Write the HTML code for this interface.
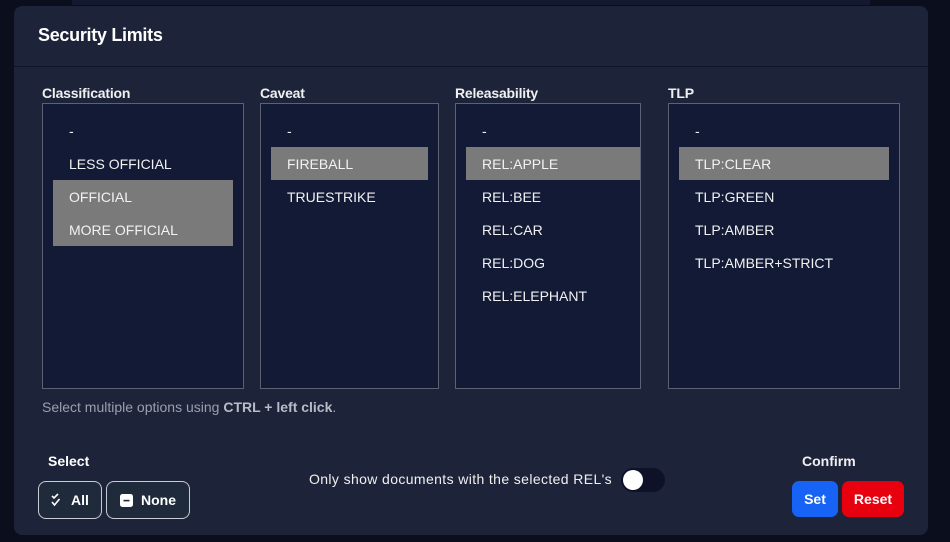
<!DOCTYPE html>
<html><head><meta charset="utf-8"><style>
*{margin:0;padding:0;box-sizing:border-box}
body{width:950px;height:542px;background:#0b0e1c;font-family:"Liberation Sans",sans-serif;color:#fff;position:relative;overflow:hidden}
.a{position:absolute}
.panel{left:14px;top:6px;width:914px;height:529px;background:#1d2339;border-radius:8px}
.top{left:72px;top:0;width:798px;height:5px;background:#141a2e}
.title{left:38px;top:25px;font-size:18px;font-weight:bold;letter-spacing:-0.3px}
.hr{left:14px;top:66px;width:914px;height:1px;background:#0f1427}
.lbl{font-size:14px;font-weight:bold;color:#f0f0f0;top:85px;letter-spacing:-0.2px}
.box{top:103px;height:286px;background:#131a35;border:1px solid #5c6273}
.it{position:absolute;left:10px;right:10px;height:33px;line-height:34px;padding-left:16px;font-size:14px;color:#f2f2f2}
.sel{background:#7a7a7a}
.btn{border:1px solid #c8ccd4;border-radius:8px;background:#1f2a3a;height:38px;top:481px;font-size:14px;font-weight:bold;display:flex;align-items:center;justify-content:center;gap:8px}
</style></head><body>
<div class="a top"></div>
<div class="a panel"></div>
<div class="a title">Security Limits</div>
<div class="a hr"></div>

<div class="a lbl" style="left:42px">Classification</div>
<div class="a lbl" style="left:260px">Caveat</div>
<div class="a lbl" style="left:455px">Releasability</div>
<div class="a lbl" style="left:668px">TLP</div>

<div class="a box" style="left:42px;width:202px">
<div class="it" style="top:10px">-</div>
<div class="it" style="top:43px">LESS OFFICIAL</div>
<div class="it sel" style="top:76px">OFFICIAL</div>
<div class="it sel" style="top:109px">MORE OFFICIAL</div>
</div>
<div class="a box" style="left:260px;width:179px">
<div class="it" style="top:10px">-</div>
<div class="it sel" style="top:43px">FIREBALL</div>
<div class="it" style="top:76px">TRUESTRIKE</div>
</div>
<div class="a box" style="left:455px;width:186px">
<div class="it" style="top:10px">-</div>
<div class="it sel" style="top:43px;right:0">REL:APPLE</div>
<div class="it" style="top:76px">REL:BEE</div>
<div class="it" style="top:109px">REL:CAR</div>
<div class="it" style="top:142px">REL:DOG</div>
<div class="it" style="top:175px">REL:ELEPHANT</div>
</div>
<div class="a box" style="left:668px;width:232px">
<div class="it" style="top:10px;right:10px">-</div>
<div class="it sel" style="top:43px;right:10px">TLP:CLEAR</div>
<div class="it" style="top:76px">TLP:GREEN</div>
<div class="it" style="top:109px">TLP:AMBER</div>
<div class="it" style="top:142px">TLP:AMBER+STRICT</div>
</div>

<div class="a" style="left:42px;top:399px;font-size:14px;color:#9aa0ad">Select multiple options using <b style="color:#b8bcc6">CTRL + left click</b>.</div>

<div class="a" style="left:48px;top:453px;font-size:14px;font-weight:bold">Select</div>
<div class="a btn" style="left:38px;width:64px"><svg width="12" height="14" viewBox="0 0 12 14"><path d="M1 3l2 2 4-4M1 9l2.5 3 5-6" stroke="#fff" stroke-width="1.6" fill="none"/></svg>All</div>
<div class="a btn" style="left:106px;width:84px"><svg width="13" height="13" viewBox="0 0 13 13"><rect x="0" y="0" width="13" height="13" rx="2.5" fill="#fff"/><rect x="3.5" y="5.8" width="6" height="1.6" fill="#1f2a3a"/></svg>None</div>

<div class="a" style="left:309px;top:471px;font-size:14px;letter-spacing:0.38px;color:#f0f0f0">Only show documents with the selected REL's</div>
<div class="a" style="left:621px;top:468px;width:44px;height:24px;border-radius:12px;background:#0d1229"></div>
<div class="a" style="left:623px;top:470px;width:20px;height:20px;border-radius:50%;background:#fff"></div>

<div class="a" style="left:802px;top:453px;font-size:14px;font-weight:bold;color:#f0f0f0">Confirm</div>
<div class="a" style="left:792px;top:481px;width:46px;height:36px;border-radius:7px;background:#1763f5;font-size:14px;font-weight:bold;line-height:36px;text-align:center">Set</div>
<div class="a" style="left:842px;top:481px;width:62px;height:36px;border-radius:7px;background:#e8000f;font-size:14px;font-weight:bold;line-height:36px;text-align:center">Reset</div>
</body></html>
